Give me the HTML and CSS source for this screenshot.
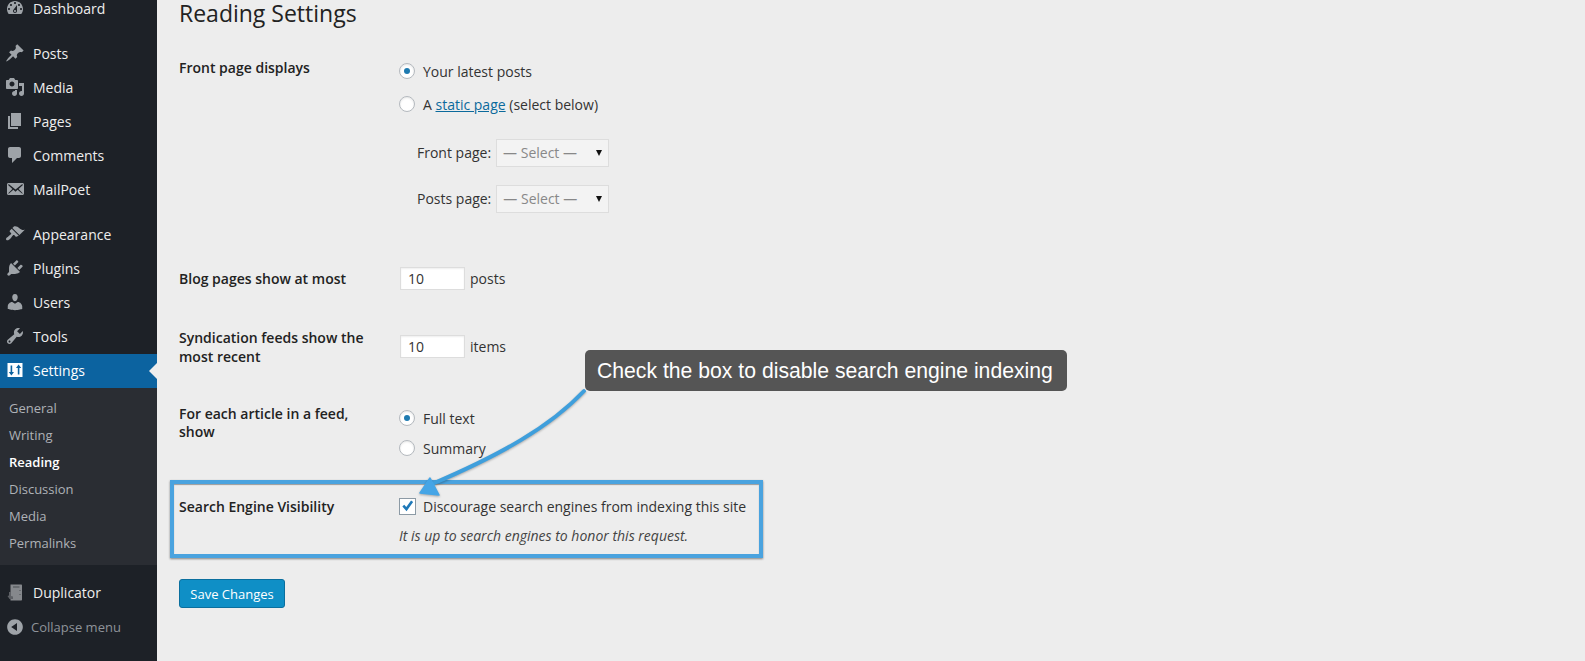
FILE: index.html
```html
<!DOCTYPE html>
<html lang="en">
<head>
<meta charset="utf-8">
<title>Reading Settings</title>
<link rel="stylesheet" href="styles.css">
</head>
<body>
<div class="page">
<nav class="side">
  <ul class="menu">
    <li class="item"><svg class="ico" viewBox="0 0 20 20"><path d="M3.76 16h12.48c1.1-1.37 1.76-3.11 1.76-5 0-4.42-3.58-8-8-8s-8 3.58-8 8c0 1.89.66 3.63 1.76 5zM10 4c.55 0 1 .45 1 1s-.45 1-1 1-1-.45-1-1 .45-1 1-1zM6 6c.55 0 1 .45 1 1s-.45 1-1 1-1-.45-1-1 .45-1 1-1zm8 0c.55 0 1 .45 1 1s-.45 1-1 1-1-.45-1-1 .45-1 1-1zm-5.37 5.55L12 7v6c0 1.1-.9 2-2 2s-2-.9-2-2c0-.57.24-1.08.63-1.45zM4 10c.55 0 1 .45 1 1s-.45 1-1 1-1-.45-1-1 .45-1 1-1zm12 0c.55 0 1 .45 1 1s-.45 1-1 1-1-.45-1-1 .45-1 1-1zm-5 3c0-.55-.45-1-1-1s-1 .45-1 1 .45 1 1 1 1-.45 1-1z" fill-rule="evenodd"/></svg><span>Dashboard</span></li>
    <li class="item gap"><svg class="ico" viewBox="0 0 20 20"><path d="M10.44 3.02l1.82-1.82 6.36 6.35-1.83 1.82c-1.05-.68-2.48-.57-3.41.36l-.75.75c-.92.93-1.04 2.35-.35 3.41l-1.83 1.82-2.41-2.41-2.8 2.79c-.42.42-3.38 2.71-3.8 2.29s1.86-3.39 2.28-3.81l2.79-2.79L4.1 9.36l1.83-1.82c1.05.69 2.48.57 3.4-.36l.75-.75c.93-.92 1.05-2.35.36-3.41z"/></svg><span>Posts</span></li>
    <li class="item"><svg class="ico" viewBox="0 0 20 20"><path d="M13 11V4c0-.55-.45-1-1-1h-1.67L9 1H5L3.67 3H2c-.55 0-1 .45-1 1v7c0 .55.45 1 1 1h10c.55 0 1-.45 1-1zM7 4.5c1.38 0 2.5 1.12 2.5 2.5S8.38 9.5 7 9.5 4.5 8.38 4.5 7 5.62 4.5 7 4.5zM14 6h5v10.5c0 1.38-1.12 2.5-2.5 2.5S14 17.88 14 16.5s1.12-2.5 2.5-2.5c.17 0 .34.02.5.05V9h-3V6zm-4 8.05V13h2v3.5c0 1.38-1.12 2.5-2.5 2.5S7 17.88 7 16.5 8.12 14 9.5 14c.17 0 .34.02.5.05z" fill-rule="evenodd"/></svg><span>Media</span></li>
    <li class="item"><svg class="ico" viewBox="0 0 20 20"><path d="M6 15V2h10v13H6zm-1 1h8v2H3V5h2v11z"/></svg><span>Pages</span></li>
    <li class="item"><svg class="ico" viewBox="0 0 20 20"><path d="M5 2h9c1.1 0 2 .9 2 2v7c0 1.1-.9 2-2 2h-2l-5 5v-5H5c-1.1 0-2-.9-2-2V4c0-1.1.9-2 2-2z"/></svg><span>Comments</span></li>
    <li class="item"><svg class="ico" viewBox="0 0 20 20"><path d="M19 14.5v-9c0-.83-.67-1.5-1.5-1.5H3.49c-.83 0-1.5.67-1.5 1.5v9c0 .83.67 1.5 1.5 1.5H17.5c.83 0 1.5-.67 1.5-1.5zm-1.31-9.11c.33.33.15.67-.03.84L13.6 9.95l3.9 4.06c.12.14.2.36.06.51-.13.16-.43.15-.56.05l-4.37-3.73-2.14 1.95-2.13-1.95-4.37 3.73c-.13.1-.43.11-.56-.05-.14-.15-.06-.37.06-.51l3.9-4.06-4.06-3.72c-.18-.17-.36-.51-.03-.84s.67-.17.95.07l6.24 5.04 6.25-5.04c.28-.24.62-.4.95-.07z" fill-rule="evenodd"/></svg><span>MailPoet</span></li>
    <li class="item gap2"><svg class="ico" viewBox="0 0 20 20"><path d="M14.48 11.06L7.41 3.99l1.5-1.5c.5-.56 2.3-.47 3.51.32 1.21.8 1.43 1.28 2.91 2.1 1.18.64 2.45 1.26 4.45.85zm-.71.71L6.7 4.7 4.93 6.47c-.39.39-.39 1.02 0 1.41l1.06 1.06c.39.39.39 1.03 0 1.42-.6.6-1.43 1.11-2.21 1.69-.35.26-.7.53-1.01.84C1.43 13.23.4 14.96 1.4 15.96c.99 1 2.73-.04 4.07-1.38.31-.31.58-.66.85-1.02.57-.78 1.08-1.61 1.69-2.21.39-.39 1.02-.39 1.41 0l1.06 1.06c.39.39 1.02.39 1.41 0z"/></svg><span>Appearance</span></li>
    <li class="item"><svg class="ico" viewBox="0 0 20 20"><path d="M13.11 4.36L9.87 7.6 8 5.73l3.24-3.24c.35-.34 1.05-.2 1.56.32.52.51.66 1.21.31 1.55zm-8 1.77l.91-1.12 9.01 9.01-1.19.84c-.71.71-2.63 1.16-3.82 1.16H6.14L4.9 17.26c-.59.59-1.54.59-2.12 0-.59-.58-.59-1.53 0-2.12l1.24-1.24v-3.88c0-1.13.4-3.19 1.09-3.89zm7.26 3.97l3.24-3.24c.34-.35 1.04-.21 1.55.31.52.51.66 1.21.31 1.55l-3.24 3.25z"/></svg><span>Plugins</span></li>
    <li class="item"><svg class="ico" viewBox="0 0 20 20"><path d="M10 9.25c-2.27 0-2.73-3.44-2.73-3.44C7 4.02 7.82 2 9.97 2c2.16 0 2.98 2.02 2.71 3.81 0 0-.41 3.44-2.68 3.44zm0 2.57L12.72 10c2.39 0 4.52 2.33 4.52 4.53v2.49s-3.65 1.13-7.24 1.13c-3.65 0-7.24-1.13-7.24-1.13v-2.49c0-2.25 1.94-4.48 4.47-4.48z"/></svg><span>Users</span></li>
    <li class="item"><svg class="ico" viewBox="0 0 20 20"><path d="M16.68 9.77c-1.34 1.34-3.3 1.67-4.95.99l-5.41 6.52c-.99.99-2.59.99-3.58 0s-.99-2.59 0-3.57l6.52-5.42c-.68-1.65-.35-3.61.99-4.95 1.28-1.28 3.12-1.62 4.72-1.06l-2.89 2.89 2.82 2.82 2.86-2.87c.53 1.58.18 3.39-1.08 4.65zM3.81 16.21c.4.39 1.04.39 1.43 0 .4-.4.4-1.04 0-1.43-.39-.4-1.03-.4-1.43 0-.39.39-.39 1.03 0 1.43z" fill-rule="evenodd"/></svg><span>Tools</span></li>
    <li class="item current"><svg class="ico" viewBox="0 0 20 20"><path d="M2.500 3h15v14h-15zM5.600 5.500v6.500H3.800l2.600 3.500L9 12H7.200V5.500zm8.800 9V8h1.800l-2.600-3.500L11 8h1.800v6.500z" fill-rule="evenodd"/></svg><span>Settings</span></li>
  </ul>
  <ul class="sub">
    <li>General</li>
    <li>Writing</li>
    <li class="on">Reading</li>
    <li>Discussion</li>
    <li>Media</li>
    <li>Permalinks</li>
  </ul>
  <ul class="menu lower">
    <li class="item"><svg class="ico" viewBox="0 0 20 20"><path d="M5.500 2.500h10.500c.6 0 1 .4 1 1v14c0 .6-.4 1-1 1H5.500z" fill="#85888c"/><path d="M8 4.500h6.500v1H8zM14.500 8h1v1h-1zM14.500 12h1v1h-1z" fill="#4b4e52"/><path d="M6 10v4l2 .6v2.400H4.500L2.500 14l1.500-.5V10z" fill="#5d6065"/></svg><span>Duplicator</span></li>
    <li class="collapse"><svg class="ico" viewBox="0 0 20 20"><path d="M10 2.160c4.330 0 7.840 3.510 7.840 7.840s-3.510 7.840-7.840 7.840S2.160 14.330 2.160 10 5.710 2.160 10 2.160zm2 11.720V6.120L6.180 9.970z" fill-rule="evenodd"/></svg><span>Collapse menu</span></li>
  </ul>
</nav>
<main class="main">
  <h1 class="title">Reading Settings</h1>
  <div class="row row-front">
    <div class="th">Front page displays</div>
    <div class="td">
      <div class="opt"><i class="radio checked"></i>Your latest posts</div>
      <div class="opt opt2"><i class="radio"></i><span>A <a class="link">static page</a> (select below)</span></div>
      <div class="pick pick1"><span class="pick-label">Front page:</span><span class="select">— Select —</span></div>
      <div class="pick pick2"><span class="pick-label">Posts page:</span><span class="select">— Select —</span></div>
    </div>
  </div>
  <div class="row row-blog">
    <div class="th">Blog pages show at most</div>
    <div class="td inline"><span class="num">10</span>posts</div>
  </div>
  <div class="row row-synd">
    <div class="th">Syndication feeds show the most recent</div>
    <div class="td inline"><span class="num">10</span>items</div>
  </div>
  <div class="row row-article">
    <div class="th">For each article in a feed, show</div>
    <div class="td">
      <div class="opt"><i class="radio checked"></i>Full text</div>
      <div class="opt opt3"><i class="radio"></i>Summary</div>
    </div>
  </div>
  <div class="row row-search">
    <div class="th">Search Engine Visibility</div>
    <div class="td">
      <div class="opt"><i class="check"><svg viewBox="0 0 16 16"><path d="M2.500 8l2-1.900 2.200 2.500L11.800 1.500l2.200 1.700-7 9.800z"/></svg></i>Discourage search engines from indexing this site</div>
      <p class="note">It is up to search engines to honor this request.</p>
    </div>
  </div>
  <button class="save" type="button">Save Changes</button>
</main>
</div>
<div class="highlight"></div>
<svg class="arrow" viewBox="0 0 210 130"><path d="M184 6 C150 42 100 70 32 99" fill="none" stroke="#3f9fdc" stroke-width="4" stroke-linecap="round"/><path d="M20 108 L30 93 L39 110 Z" fill="#45a5e6" stroke="#45a5e6" stroke-width="1.500" stroke-linejoin="round"/></svg>
<div class="callout">Check the box to disable search engine indexing</div>
</body>
</html>
```
FILE: styles.css
```css
* { box-sizing: border-box; }
html, body { margin: 0; height: 100%; overflow: hidden; }
body { background: #ededed; font-family: "Open Sans", sans-serif; font-size: 14px; color: #333; position: relative; }
ul { list-style: none; margin: 0; padding: 0; }
.page { display: flex; height: 661px; }
.side { width: 157px; flex: none; background: #1d2127; color: #eee; margin-top: -9px; height: 670px; }
.item { height: 34px; display: flex; align-items: center; position: relative; font-size: 14px; color: #eee; }
.item span { margin-left: 5px; }
.ico { width: 20px; height: 20px; margin-left: 5px; margin-right: 3px; fill: #9ea3a8; flex: none; }
.gap { margin-top: 11px; }
.gap2 { margin-top: 11px; }
.current { background: #0c63a0; color: #fff; margin-top: 1px; padding-bottom: 2px; }
.current .ico { fill: #fff; }
.current::after { content: ""; position: absolute; right: 0; top: 50%; margin-top: -8px; border: 8px solid transparent; border-right-color: #ededed; border-left: 0; }
.sub { background: #2a2d33; padding: 7px 0 8px; color: #aeb2b7; font-size: 13px; }
.sub li { height: 27px; line-height: 27px; padding-left: 9px; }
.sub .on { color: #fff; font-weight: 600; }
.lower { margin-top: 10px; }
.collapse { height: 34px; margin-top: 1px; display: flex; align-items: center; font-size: 13px; color: #8e9399; }
.collapse span { margin-left: 3px; }
.main { flex: 1; padding-left: 22px; min-width: 0; }
.title { margin: -1px 0 0; font-size: 23px; font-weight: 400; line-height: 28px; color: #222; height: 59px; }
.row { display: flex; }
.th { width: 220px; flex: none; font-weight: 600; color: #222; line-height: 19px; padding-right: 30px; }
.td { flex: 1; min-width: 0; }
.row-front { height: 209px; }
.row-blog { height: 61px; }
.row-blog .th { padding-top: 2px; }
.row-synd { height: 77px; }
.row-synd .td { padding-top: 7px; }
.row-article { height: 88px; }
.row-article .th { line-height: 18px; }
.row-search { height: 86px; }
.row-search .th { padding-top: 4px; }
.opt { display: flex; align-items: center; height: 20px; margin-top: 3px; }
.opt2 { margin-top: 13px; }
.opt3 { margin-top: 10px; }
.radio { width: 16px; height: 16px; border-radius: 50%; border: 1px solid #b4b9be; background: #fff; margin-right: 8px; position: relative; box-shadow: inset 0 1px 2px rgba(0,0,0,.1); flex: none; }
.checked::after { content: ""; position: absolute; left: 4px; top: 4px; width: 6px; height: 6px; border-radius: 50%; background: #1e7ab0; }
.link { color: #0b6a9c; text-decoration: underline; }
.pick { display: flex; align-items: center; padding-left: 18px; height: 28px; }
.pick1 { margin-top: 24px; }
.pick2 { margin-top: 18px; }
.pick-label { margin-right: 5px; }
.select { width: 113px; height: 28px; margin-top: 2px; line-height: 26px; border: 1px solid #ddd; background: #f3f3f3; color: #888; padding-left: 6px; position: relative; }
.select::after { content: ""; position: absolute; right: 6px; top: 10px; border: 3.500px solid transparent; border-top: 6px solid #111; border-bottom: 0; }
.inline { display: flex; align-items: flex-start; line-height: 23px; }
.num { width: 65px; height: 23px; margin-left: 1px; line-height: 21px; border: 1px solid #ddd; background: #fff; padding-left: 7px; margin-right: 5px; box-shadow: inset 0 1px 2px rgba(0,0,0,.07); }
.check { width: 17px; height: 17px; border: 1px solid #8c9aa5; background: #fff; margin-right: 7px; flex: none; display: block; }
.check svg { display: block; width: 15px; height: 15px; fill: #1e78b8; }
.note { margin: 10px 0 0; font-style: italic; color: #444; }
.save { display: block; width: 106px; height: 29px; padding: 0; font: 13px "Open Sans", sans-serif; color: #fff; background: #0f8fc6; border: 1px solid #0a6f9e; border-radius: 3px; }
.highlight { position: absolute; left: 170px; top: 480px; width: 593px; height: 78px; border: 4px solid #4aa3df; box-shadow: 0 1px 2px rgba(0,0,0,.45), inset 0 1px 1px rgba(0,0,0,.35); }
.arrow { position: absolute; left: 400px; top: 385px; width: 210px; height: 130px; filter: drop-shadow(0 1px 1px rgba(0,0,0,.3)); }
.callout { position: absolute; left: 585px; top: 350px; width: 482px; height: 41px; padding-left: 12px; background: #555; color: #fff; border-radius: 5px; font: 21.2px/41px "Liberation Sans", sans-serif; box-shadow: 0 0 0 1px #ededed; }
```
